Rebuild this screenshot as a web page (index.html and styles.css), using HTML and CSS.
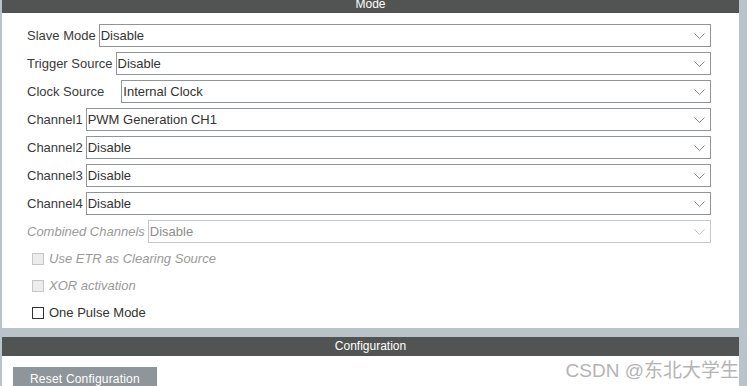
FILE: index.html
```html
<!DOCTYPE html>
<html>
<head>
  <meta charset="UTF-8">
  <meta name="viewport" content="width=device-width, initial-scale=1.0">
  <title>TIM Mode and Configuration</title>
  <link rel="stylesheet" href="styles.css">
</head>
<body>
  <div class="frame">
    <section class="panel mode-panel">
      <div class="panel-title">Mode</div>
      <div class="panel-body">
        <div class="field">
          <span class="field-label">Slave Mode</span>
          <div class="combo"><span>Disable</span><svg class="chevron" width="11" height="6" viewBox="0 0 11 6"><polyline points="0.5,0.5 5.5,5.5 10.5,0.5"/></svg></div>
        </div>
        <div class="field">
          <span class="field-label">Trigger Source</span>
          <div class="combo"><span>Disable</span><svg class="chevron" width="11" height="6" viewBox="0 0 11 6"><polyline points="0.5,0.5 5.5,5.5 10.5,0.5"/></svg></div>
        </div>
        <div class="field">
          <span class="field-label clock-label">Clock Source</span>
          <div class="combo"><span>Internal Clock</span><svg class="chevron" width="11" height="6" viewBox="0 0 11 6"><polyline points="0.5,0.5 5.5,5.5 10.5,0.5"/></svg></div>
        </div>
        <div class="field">
          <span class="field-label">Channel1</span>
          <div class="combo"><span>PWM Generation CH1</span><svg class="chevron" width="11" height="6" viewBox="0 0 11 6"><polyline points="0.5,0.5 5.5,5.5 10.5,0.5"/></svg></div>
        </div>
        <div class="field">
          <span class="field-label">Channel2</span>
          <div class="combo"><span>Disable</span><svg class="chevron" width="11" height="6" viewBox="0 0 11 6"><polyline points="0.5,0.5 5.5,5.5 10.5,0.5"/></svg></div>
        </div>
        <div class="field">
          <span class="field-label">Channel3</span>
          <div class="combo"><span>Disable</span><svg class="chevron" width="11" height="6" viewBox="0 0 11 6"><polyline points="0.5,0.5 5.5,5.5 10.5,0.5"/></svg></div>
        </div>
        <div class="field">
          <span class="field-label">Channel4</span>
          <div class="combo"><span>Disable</span><svg class="chevron" width="11" height="6" viewBox="0 0 11 6"><polyline points="0.5,0.5 5.5,5.5 10.5,0.5"/></svg></div>
        </div>
        <div class="field is-disabled">
          <span class="field-label">Combined Channels</span>
          <div class="combo"><span>Disable</span><svg class="chevron" width="11" height="6" viewBox="0 0 11 6"><polyline points="0.5,0.5 5.5,5.5 10.5,0.5"/></svg></div>
        </div>

        <div class="checks">
          <div class="check is-disabled"><span class="box"></span>Use ETR as Clearing Source</div>
          <div class="check is-disabled"><span class="box"></span>XOR activation</div>
          <div class="check"><span class="box"></span>One Pulse Mode</div>
        </div>
      </div>
    </section>

    <section class="panel config-panel">
      <div class="panel-title">Configuration</div>
      <div class="panel-body">
        <button class="reset-btn">Reset Configuration</button>
      </div>
    </section>
  </div>

  <div class="watermark">CSDN @东北大学生</div>
</body>
</html>
```

FILE: styles.css
```css
html, body {
  margin: 0;
  height: 100%;
  overflow: hidden;
}

body {
  font-family: "Liberation Sans", Arial, sans-serif;
  background-color: #fff;
  color: #333;
  position: relative;
}

.frame {
  width: 747px;
  height: 100%;
  box-sizing: border-box;
  padding: 0 8px 0 2px;
  background-color: #b9c4ca;
  display: flex;
  flex-direction: column;
  gap: 9px;
}

.panel {
  background-color: #fff;
}

.config-panel {
  flex: 1;
}

.panel-title {
  height: 19px;
  line-height: 19px;
  background-color: #525453;
  color: #fff;
  font-size: 12px;
  text-align: center;
}

/* the Mode header is scrolled partly out of view */
.mode-panel .panel-title {
  height: 13px;
  line-height: 9px;
}

.mode-panel .panel-body {
  padding: 11px 28px 2px 25px;
  display: flex;
  flex-direction: column;
  gap: 5px;
}

.field {
  display: flex;
  align-items: center;
  gap: 3px;
  height: 23px;
  font-size: 13px;
}

.field-label {
  white-space: nowrap;
  color: #3a3a3a;
}

.clock-label {
  margin-right: 14px;
}

.combo {
  flex: 1;
  height: 23px;
  box-sizing: border-box;
  border: 1px solid #8f9599;
  padding: 0 5px 0 1px;
  display: flex;
  align-items: center;
  justify-content: space-between;
  color: #333;
}

.chevron polyline {
  fill: none;
  stroke: #8a8d8f;
  stroke-width: 1;
}

.field.is-disabled .field-label {
  font-style: italic;
  color: #9a9a9a;
}

.field.is-disabled .combo {
  border-color: #c4c8ca;
  color: #8c8c8c;
}

.field.is-disabled .chevron polyline {
  stroke: #c4c4c4;
}

.checks {
  margin-top: -3px;
}

.check {
  height: 27px;
  display: flex;
  align-items: center;
  gap: 5px;
  padding-left: 5px;
  font-size: 13px;
  color: #333;
}

.check .box {
  width: 12px;
  height: 12px;
  box-sizing: border-box;
  border: 1px solid #333;
  background-color: #fff;
}

.check.is-disabled {
  font-style: italic;
  color: #9a9a9a;
}

.check.is-disabled .box {
  border-color: #c6c6c6;
  background-color: #ececec;
}

.config-panel .panel-body {
  padding: 11px 11px 0;
}

.reset-btn {
  display: block;
  height: 24px;
  padding: 0 17px;
  border: none;
  background-color: #8e969b;
  color: #fff;
  font-family: "Liberation Sans", Arial, sans-serif;
  font-size: 12px;
  letter-spacing: 0.2px;
}

.watermark {
  position: absolute;
  right: 16px;
  bottom: 4px;
  font-family: "Liberation Sans", "Noto Sans CJK SC", sans-serif;
  font-size: 19px;
  color: #b4b4b4;
  white-space: nowrap;
}
```
